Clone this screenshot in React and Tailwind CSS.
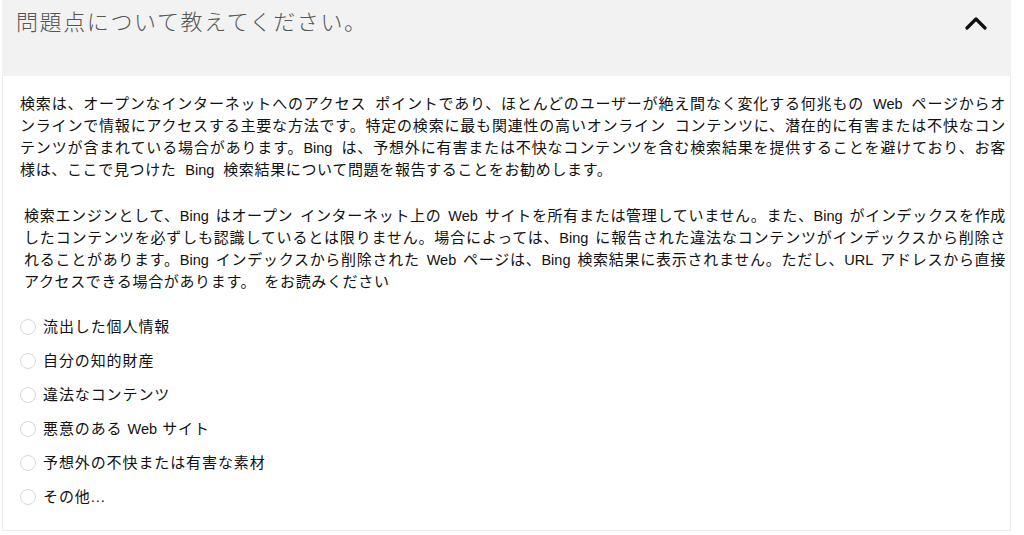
import React, { useState } from "react"

const options = [
    "流出した個人情報",
    "自分の知的財産",
    "違法なコンテンツ",
    "悪意のある Web サイト",
    "予想外の不快または有害な素材",
    "その他...",
]

// latin words are set tighter than the japanese around them
const fmt = (text) =>
    text.split(/([A-Za-z.]+)/).map((part, i) =>
        /[A-Za-z]/.test(part) ? (
            <span key={i} className="tracking-normal text-[14.5px]">
                {part}
            </span>
        ) : (
            part
        )
    )

const para1 =
    "検索は、オープンなインターネットへのアクセス ポイントであり、ほとんどのユーザーが絶え間なく変化する何兆もの Web ページからオンラインで情報にアクセスする主要な方法です。特定の検索に最も関連性の高いオンライン コンテンツに、潜在的に有害または不快なコンテンツが含まれている場合があります。Bing は、予想外に有害または不快なコンテンツを含む検索結果を提供することを避けており、お客様は、ここで見つけた Bing 検索結果について問題を報告することをお勧めします。"

const para2 =
    "検索エンジンとして、Bing はオープン インターネット上の Web サイトを所有または管理していません。また、Bing がインデックスを作成したコンテンツを必ずしも認識しているとは限りません。場合によっては、Bing に報告された違法なコンテンツがインデックスから削除されることがあります。Bing インデックスから削除された Web ページは、Bing 検索結果に表示されません。ただし、URL アドレスから直接アクセスできる場合があります。　をお読みください"

export default function App() {
    const [open, setOpen] = useState(true)
    const [picked, setPicked] = useState(null)

    return (
        <div
            className="w-[1024px] h-[535px] bg-white pl-[2px] pr-[13px]"
            style={{ fontFamily: '"Liberation Sans", "Noto Sans CJK JP", sans-serif' }}
        >
            {/* Header */}
            <div className="h-[76px] bg-[#f2f2f2] flex items-start justify-between pl-[14px] pr-[24px] pt-[8px]">
                <h2 className="text-[22px] font-light text-[#555] leading-[30px] tracking-[1.6px]">
                    問題点について教えてください。
                </h2>
                <button onClick={() => setOpen(!open)} className="mt-[9px] cursor-pointer">
                    <svg width="22" height="13" viewBox="0 0 22 13" fill="none">
                        <polyline
                            points="2,11 11,2 20,11"
                            stroke="#111"
                            strokeWidth="3.2"
                            strokeLinecap="round"
                            strokeLinejoin="round"
                        />
                    </svg>
                </button>
            </div>

            {/* Body */}
            {open && (
                <div className="border border-t-0 border-[#ececec] h-[455px] pl-[17px] pr-[4px] pt-[17px] text-[15px] tracking-[0.65px] text-[#111] leading-[22px]">
                    <p className="text-justify [word-spacing:4px]">{fmt(para1)}</p>
                    <p className="mt-[24px] pl-[4px] text-justify [word-spacing:2px]">{fmt(para2)}</p>
                    <div className="mt-[17px] tracking-[0.9px]">
                        {options.map((o, i) => (
                            <label key={o} className="flex items-center h-[34px] cursor-pointer">
                                <span
                                    onClick={() => setPicked(i)}
                                    className="w-[16px] h-[16px] shrink-0 rounded-full border border-[#d9d9d9] bg-white mr-[7px] flex items-center justify-center"
                                >
                                    {picked === i && <span className="w-[8px] h-[8px] rounded-full bg-[#333]" />}
                                </span>
                                <span>{fmt(o)}</span>
                            </label>
                        ))}
                    </div>
                </div>
            )}
        </div>
    )
}
